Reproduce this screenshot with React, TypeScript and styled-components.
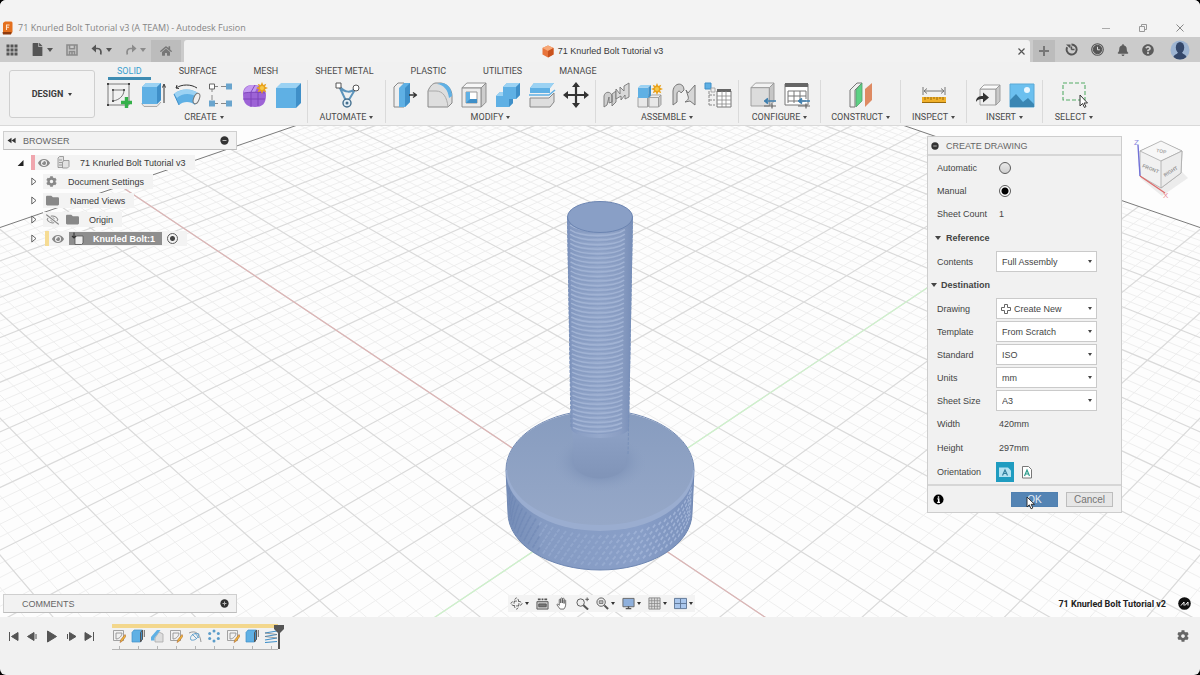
import React from "react";
import styled, { createGlobalStyle, css } from "styled-components";
import { FaBell, FaQuestionCircle, FaCog, FaFolder, FaHome, FaEye, FaRegEyeSlash, FaFile } from "react-icons/fa";

const GlobalStyle = createGlobalStyle`
  * { box-sizing: border-box; }
  body { margin: 0; background: #000; }
  button, select, input { font: inherit; color: inherit; margin: 0; }
  button { background: none; border: 0; padding: 0; cursor: default; }
  svg { display: block; flex: none; }
`;

/* ---------- shell ---------- */

const Page = styled.div`
  min-height: 100vh;
  display: flex;
  flex-direction: column;
  overflow: hidden;
  border-radius: 6px;
  background: #f1f1f1;
  color: #3c3c3c;
  font-family: Roboto, "Liberation Sans", sans-serif;
  font-size: 9px;
  line-height: 12px;
`;

const TitleBar = styled.header`
  display: flex;
  align-items: center;
  padding: 18px 14px 0 2px;
  height: 37px;
  background: #f3f3f3;
  color: #858585;
`;

const WindowTitle = styled.h1`
  flex: 1;
  margin: 0 0 0 5px;
  font: 400 9px/12px "Open Sans", "Noto Sans", sans-serif;
`;

const WindowButtons = styled.div`
  display: flex;
  gap: 25px;
`;

const QuickBar = styled.div`
  display: flex;
  height: 25px;
  background: #cbcbcb;
  color: #5c5c5c;
`;

const QuickTools = styled.div`
  display: flex;
  align-items: center;
  gap: 13px;
  width: 151px;
  padding-left: 6px;
`;

const QuickButton = styled.button<{ $dim?: boolean }>`
  display: flex;
  align-items: center;
  gap: 3px;
  color: ${(p) => (p.$dim ? "#8b8b8b" : "#555")};
`;

const SquareTab = styled.button<{ $width: number }>`
  display: flex;
  align-items: center;
  justify-content: center;
  width: ${(p) => p.$width}px;
  margin: 3px 3px 0 0;
  background: #bcbcbc;
  color: #777;
`;

const DocumentTab = styled.div`
  flex: 1;
  display: flex;
  align-items: center;
  margin: 3px 3px 0 0;
  padding: 0 4px;
  border-radius: 3px 3px 0 0;
  background: #f2f2f2;
`;

const DocumentName = styled.span`
  flex: 1;
  display: flex;
  align-items: center;
  justify-content: center;
  gap: 4px;
  font: 400 9px/12px "Liberation Sans", sans-serif;
  color: #3a3a3a;
`;

const AccountTools = styled.div`
  display: flex;
  align-items: center;
  gap: 13px;
  padding: 0 10px 0 7px;
`;

const AccountButton = styled.button`
  margin-left: 3px;
`;

/* ---------- ribbon ---------- */

const Ribbon = styled.div`
  display: flex;
  padding-left: 9px;
  height: 64px;
  border-bottom: 1px solid #d9d9d9;
`;

const WorkspaceButton = styled.button`
  display: flex;
  align-items: center;
  justify-content: center;
  gap: 5px;
  width: 86px;
  height: 48px;
  margin-top: 8px;
  border: 1px solid #cfcfcf;
  border-radius: 3px;
  background: #f3f3f3;
  font-weight: 700;
`;

const RibbonBody = styled.div`
  flex: 1;
  padding-left: 6px;
`;

const TabList = styled.nav`
  display: flex;
  gap: 19px;
  padding-left: 7px;
`;

const RibbonTab = styled.button<{ $active?: boolean }>`
  height: 18px;
  padding: 2px 9px 0;
  line-height: 12px;
  border-bottom: 3px solid ${(p) => (p.$active ? "#3f8cb2" : "transparent")};
  color: ${(p) => (p.$active ? "#3aa0cf" : "#4a4a4a")};
`;

const GroupRow = styled.div`
  display: flex;
`;

const Group = styled.section<{ $width: number; $last?: boolean }>`
  display: flex;
  flex-direction: column;
  align-items: center;
  width: ${(p) => p.$width}px;
  border-right: ${(p) => (p.$last ? "0" : "1px solid #dadada")};
`;

const GroupIcons = styled.div`
  display: flex;
  gap: 6px;
  padding: 1px 0 2px;
`;

const GroupLabel = styled.button`
  display: flex;
  align-items: center;
  gap: 3px;
  line-height: 12px;
  color: #4a4a4a;
`;

const Caret = styled.span<{ $small?: boolean }>`
  border: ${(p) => (p.$small ? 2 : 3)}px solid transparent;
  border-top: ${(p) => (p.$small ? 3 : 4)}px solid currentColor;
  border-bottom: 0;
`;

/* ---------- viewport ---------- */

const Viewport = styled.main`
  position: relative;
  flex: 1;
  display: flex;
  background: #fdfdfd;
  min-height: 480px;
  font-family: "Liberation Sans", Arial, sans-serif;
`;

const Scene = styled.svg`
  position: absolute;
  inset: 0;
  width: 100%;
  height: 100%;
`;

const Overlay = styled.div`
  position: relative;
  flex: 1;
  display: flex;
  flex-direction: column;
  justify-content: space-between;
  padding: 5px 0 4px 3px;
`;

const OverlayTop = styled.div`
  display: flex;
  justify-content: space-between;
  align-items: flex-start;
`;

const OverlayBottom = styled.div`
  display: grid;
  grid-template-columns: 1fr auto 1fr;
  align-items: center;
`;

const PanelBar = styled.div`
  display: flex;
  align-items: center;
  gap: 7px;
  width: 234px;
  height: 19px;
  padding: 0 7px 0 3px;
  border: 1px solid #cfcfcf;
  border-bottom-color: #bdbdbd;
  background: #f2f2f2;
  color: #666;
`;

const PanelName = styled.span<{ $indent?: boolean }>`
  flex: 1;
  padding-left: ${(p) => (p.$indent ? 15 : 0)}px;
`;

const Tree = styled.ul`
  list-style: none;
  margin: 3px 0 0;
  padding: 0;
`;

const TreeRow = styled.li<{ $level: number }>`
  display: flex;
  align-items: center;
  height: 19px;
  padding-left: ${(p) => (p.$level ? 28 : 14)}px;
  color: #3a3a3a;
`;

const Expander = styled.button`
  width: 12px;
`;

const TreeItem = styled.span<{ $gap?: number }>`
  display: flex;
  align-items: center;
  gap: ${(p) => p.$gap ?? 7}px;
  height: 15px;
  padding: 0 9px 0 3px;
  background: #f3f3f3;
  color: #888;
`;

const ItemName = styled.span`
  padding-left: 3px;
  color: #3a3a3a;
`;

const StatusStrip = styled.i<{ $color: string }>`
  width: 4px;
  height: 15px;
  margin-left: 2px;
  background: ${(p) => p.$color};
`;

const SelectedItem = styled.span`
  display: flex;
  align-items: center;
  gap: 9px;
  height: 13px;
  padding: 0 7px 0 2px;
  background: #8e8e8e;
  color: #fff;
  font-weight: 700;
`;

const radioLook = css`
  appearance: none;
  border: 1px solid #5c5c5c;
  border-radius: 50%;
`;

const ActivateRadio = styled.input`
  ${radioLook}
  width: 11px;
  height: 11px;
  background: radial-gradient(circle, #444 0 2px, #f3f3f3 3px);
`;

/* ---------- dialog ---------- */

const RightSide = styled.div`
  display: flex;
  align-items: flex-start;
  gap: 10px;
  padding: 5px 8px 0 0;
`;

const Dialog = styled.form`
  width: 195px;
  border: 1px solid #cdcdcd;
  background: #f1f1f1;
  color: #444;
`;

const DialogHeader = styled.div`
  display: flex;
  align-items: center;
  gap: 7px;
  height: 19px;
  padding-left: 3px;
  border-bottom: 2px solid #d6d6d6;
  color: #666;
`;

const Field = styled.div<{ $plain?: boolean }>`
  display: grid;
  grid-template-columns: 59px 101px;
  align-items: center;
  height: ${(p) => (p.$plain ? 24 : 23)}px;
  padding-left: 9px;
`;

const Section = styled.h2<{ $indent?: boolean }>`
  display: flex;
  align-items: center;
  gap: ${(p) => (p.$indent ? 5 : 4)}px;
  height: 24px;
  margin: 0;
  padding-left: ${(p) => (p.$indent ? 7 : 3)}px;
  font-size: 9px;
  font-weight: 700;
`;

const Radio = styled.input`
  ${radioLook}
  width: 12px;
  height: 12px;
  margin-left: 3px;
  background: linear-gradient(#e9e9e9, #cfcfcf);
  &:checked {
    background: radial-gradient(circle, #000 0 3px, #fff 4px);
  }
`;

const Output = styled.output`
  padding-left: 3px;
`;

const SelectBox = styled.span`
  position: relative;
  display: flex;
  align-items: center;
  height: 21px;
  border: 1px solid #cacaca;
  background: #fff;
  > svg {
    position: absolute;
    left: 4px;
    pointer-events: none;
  }
  > span {
    position: absolute;
    right: 4px;
    pointer-events: none;
  }
`;

const Select = styled.select<{ $icon?: boolean }>`
  appearance: none;
  width: 100%;
  height: 19px;
  border: 0;
  padding: 0 0 0 ${(p) => (p.$icon ? 17 : 5)}px;
  background: transparent;
`;

const Orientations = styled.div`
  display: flex;
  gap: 4px;
`;

const OrientationButton = styled.button<{ $on?: boolean }>`
  display: flex;
  align-items: center;
  justify-content: center;
  width: 18px;
  height: 20px;
  background: ${(p) => (p.$on ? "#1f9cc0" : "transparent")};
`;

const DialogFooter = styled.div`
  display: flex;
  align-items: center;
  gap: 8px;
  height: 28px;
  margin-top: 1px;
  padding: 0 8px 0 5px;
  border-top: 2px solid #d6d6d6;
  > svg {
    margin-right: auto;
  }
`;

const ActionButton = styled.button<{ $primary?: boolean }>`
  position: relative;
  width: 47px;
  height: 15px;
  font-size: 10px;
  line-height: 13px;
  border: 1px solid ${(p) => (p.$primary ? "#5080b0" : "#bdbdbd")};
  background: ${(p) => (p.$primary ? "#5484b4" : "#e6e6e6")};
  color: ${(p) => (p.$primary ? "#e4edf6" : "#757575")};
`;

const Pointer = styled.svg`
  position: absolute;
  left: 14px;
  top: 3px;
`;

/* ---------- bottom ---------- */

const NavBar = styled.div`
  display: flex;
  align-items: center;
  gap: 7px;
  height: 17px;
  padding: 0 2px;
  background: #f3f3f3;
`;

const NavButton = styled.button`
  display: flex;
  align-items: center;
  gap: 2px;
  color: #333;
`;

const VersionNote = styled.div`
  display: flex;
  align-items: center;
  justify-content: flex-end;
  gap: 12px;
  padding-right: 9px;
  font-family: Roboto, "Liberation Sans", sans-serif;
  font-weight: 700;
  color: #222;
`;

const Timeline = styled.footer`
  display: flex;
  align-items: flex-start;
  height: 58px;
  padding: 7px 11px 0 7px;
  color: #555;
`;

const Playback = styled.div`
  display: flex;
  gap: 6px;
  padding-top: 6px;
`;

const History = styled.div`
  display: flex;
  margin: 0 auto 0 16px;
`;

const Features = styled.ol`
  display: flex;
  gap: 5px;
  margin: 0;
  padding: 1px 0 0;
  list-style: none;
  border-top: 4px solid #f3d78c;
  border-bottom: 1px solid #b5b5b5;
`;

const Feature = styled.li`
  display: flex;
  flex-direction: column;
  align-items: center;
  gap: 3px;
  &::after {
    content: "";
    width: 1px;
    height: 3px;
    background: #b5b5b5;
  }
`;

const Playhead = styled.svg`
  margin-left: -4px;
`;

const SettingsButton = styled.button`
  padding-top: 6px;
  color: #666;
`;

/* ---------- small glyphs ---------- */

const Dot = ({ plus, info, size = 9 }: { plus?: boolean; info?: boolean; size?: number }) => (
  <svg width={size} height={size} viewBox="0 0 10 10">
    <circle cx="5" cy="5" r="4.6" fill={info ? "#000" : "#333"} />
    {info ? (
      <path d="M5 2v1.400M4 4.400h1.200v3M3.800 7.600h2.600" stroke="#fff" strokeWidth="1.300" fill="none" />
    ) : (
      <path d={plus ? "M2.800 5h4.400M5 2.800v4.400" : "M2.800 5h4.400"} stroke="#bbb" strokeWidth="1.100" />
    )}
  </svg>
);

const Collapse = () => (
  <svg width="9" height="7" viewBox="0 0 9 7"><path d="M4.500 0.800v5.400L0.500 3.500zM8.600 0.800v5.400L4.600 3.500z" fill="#333" /></svg>
);

const ClosedArrow = () => (
  <svg width="6" height="9" viewBox="0 0 6 9"><path d="M0.800 1v7L5 4.500z" fill="#fdfdfd" stroke="#555" strokeWidth="0.900" /></svg>
);

const OpenArrow = () => (
  <svg width="8" height="8" viewBox="0 0 8 8"><path d="M6.500 1v6H0.600z" fill="#222" /></svg>
);

const CurvedArrow = ({ forward }: { forward?: boolean }) => (
  <svg width="12" height="12" viewBox="0 0 12 12">
    <g transform={forward ? "matrix(-1 0 0 1 12 0)" : undefined}>
      <path d="M3 4.500h3.500c3 0 4 2.500 3.200 6" fill="none" stroke="currentColor" strokeWidth="1.700" />
      <path d="M5 0.500v8L0.500 4.500z" fill="currentColor" />
    </g>
  </svg>
);

const DiskIcon = () => (
  <svg width="12" height="12" viewBox="0 0 12 12" fill="none" stroke="currentColor" strokeWidth="1.600">
    <path d="M1 1h10v10H1zM3.500 1v3.800h5V1M3.500 11V7.500h5V11M6 8v3" />
  </svg>
);

const ComponentGlyph = ({ light }: { light?: boolean }) => (
  <svg width="13" height="13" viewBox="0 0 13 13" fill={light ? "#ededed" : "#e2e2e2"} stroke={light ? "#555" : "#8a8a8a"} strokeWidth="0.800">
    {light ? (
      <>
        <path d="M4 5.500l1.500-1.500h6.500v7l-1.500 1.500H4z" />
        <path d="M3 0.500v5.500M1 4l2 2 2-2" fill="none" stroke="#333" strokeWidth="1.100" />
      </>
    ) : (
      <>
        <path d="M1 2l1.500-1.500h4v11H1z" />
        <path d="M2 4h3M2 6.500h3M2 9h3" />
        <path d="M5.500 6l1.500-1.500h5v6l-1.500 1.500h-5z" />
      </>
    )}
  </svg>
);

const FusionLogo = () => (
  <svg width="11" height="14" viewBox="0 0 11 14">
    <path d="M1 2l2-1.500h6.500l1 1V11L9 13H1z" fill="#e4701e" />
    <path d="M0.500 11h9L9 13.500H1z" fill="#8f3a0c" />
    <path d="M4.500 9V4h3M4.500 6.300h2.500" stroke="#ffe3cc" strokeWidth="1.100" fill="none" />
  </svg>
);

/* ---------- ribbon drawings ---------- */

const BLUE = "#5fb0e4";
const BLUE_D = "#3f8fc8";
const BLUE_L = "#9bd2f3";
const GREY = "#dedede";
const LINE = "#7a7a7a";

const Ico = ({ children, size = 28 }: { children: React.ReactNode; size?: number }) => (
  <svg width={size} height={size} viewBox="0 0 28 28" fill="none" strokeLinejoin="round">{children}</svg>
);

const Cube = ({ x = 1, y = 2, s = 24, f = BLUE, t = BLUE_L, r = BLUE_D, stroke = "none" }) => {
  const d = s * 0.2;
  return (
    <g stroke={stroke} strokeWidth="0.9">
      <path d={`M${x} ${y + d}h${s - d}v${s - d}h${d - s}z`} fill={f} />
      <path d={`M${x} ${y + d}l${d} ${-d}h${s - d}l${-d} ${d}z`} fill={t} />
      <path d={`M${x + s - d} ${y + d}l${d} ${-d}v${s - d}l${-d} ${d}z`} fill={r} />
    </g>
  );
};

const Spark = ({ x, y }: { x: number; y: number }) => (
  <g transform={`translate(${x} ${y})`}>
    <path d="M0-6l1.300 3 3-1.300-1.300 3 3 1.300-3 1.300 1.300 3-3-1.300L0 6l-1.300-3-3 1.300 1.300-3-3-1.300 3-1.300-1.300-3 3 1.300z" fill="#e9a21c" />
    <circle r="2" fill="#f7c94a" />
  </g>
);

const Arrows = ({ x, y }: { x: number; y: number }) => (
  <g transform={`translate(${x} ${y})`} stroke="#666" strokeWidth="1.200">
    <path d="M0 0h12M4-2.500L1 0l3 2.500" stroke="#3f7fae" strokeWidth="1.700" />
    <path d="M0 5h12M8 2.500v5" />
  </g>
);

const icons: Record<string, React.ReactNode> = {
  sketch: <><path d="M3 3h21v21H3z" stroke={LINE} /><path d="M2 2h2v2H2zM23 2h2v2h-2zM2 23h2v2H2z" fill="#444" /><path d="M8 9h11c0 6-5 10-11 11z" stroke="#777" /><path d="M7 8h2v2H7zM18 8h2v2h-2zM7 19h2v2H7z" fill="#555" /><path d="M21.500 16v11M16 21.500h11" stroke="#35b04a" strokeWidth="3.400" /></>,
  extrude: <><path d="M3 22v1l2 2.500h13l4-4.500" fill="#e6e6e6" stroke="#999" strokeWidth=".8" /><path d="M3 6l4-4h15v17l-4 4H3z" fill={BLUE} /><path d="M3 6l4-4h15l-4 4z" fill={BLUE_L} /><path d="M18 6l4-4v17l-4 4z" fill={BLUE_D} /><path d="M25 22V5M23.500 6.500L25 3l1.500 3.500" stroke="#333" /></>,
  revolve: <><path d="M1 13c6-6 19-6 25 0l-4 11c-4-4-12-4-16 0z" fill={BLUE} /><path d="M1 13c6-6 19-6 25 0l-2 3c-6-4-15-4-20 1z" fill={BLUE_L} /><path d="M1 13l5 11" stroke={BLUE_D} /><ellipse cx="23.500" cy="17.500" rx="2.800" ry="5.500" fill="#eee" stroke="#777" transform="rotate(22 23.5 17.500)" /><path d="M3 7C9 3 18 3 24 7M3 7l1-3M3 7l3 .5" stroke="#333" /></>,
  pattern: <><path d="M6 5.500h16M6 22.500h16M5 6v16" stroke="#888" strokeDasharray="5 3" /><path d="M2.500 3h5v5h-5z" fill="#fff" stroke="#666" /><path d="M19 2.500h6v6h-6zM2 19.500h6v6H2zM19 19.500h6v6h-6z" fill="#6aa5ce" /></>,
  form: <><path d="M2 13c0-6 4-9 9-9 8 0 14 3 14 10 0 9-4 12-11 12C6 26 2 23 2 13z" fill="#9d63d6" /><path d="M3 10c2-5 6-6 9-6l5 1-3 6c-4 0-8 0-11 1z" fill="#c49af0" /><path d="M10 11v15M17 11v14M2 18h22M14 4l-4 7M3 12c5-1 15-1 21 0" stroke="#7c42b8" strokeWidth=".9" /><Spark x={21} y={7} /></>,
  box: <Cube x={1} y={2} s={25} />,
  automate: <><path d="M6 5l8 17L23 7M7 6c5 6 11 6 16 1" stroke="#5d94bb" strokeWidth="2" /><path d="M3 2h5v5H3z" fill="#fff" stroke="#555" /><circle cx="23" cy="7" r="3" fill="#fff" stroke="#555" /><circle cx="14" cy="22" r="4" fill="#e2eef6" stroke="#446f8e" strokeWidth="1.400" /><circle cx="14" cy="22" r="1.500" fill="#446f8e" /></>,
  presspull: <><path d="M2 6l4-4h6v24H2z" fill="#eee" stroke="#888" /><path d="M7 7l5-5h6v19l-5 5H7z" fill={BLUE} /><path d="M13 7l5-5v19l-5 5z" fill={BLUE_D} /><path d="M17 14h7M21 11.500l3.500 2.500-3.500 2.500" stroke="#333" strokeWidth="1.300" /></>,
  fillet: <><path d="M2 10c2-5 5-8 8-8h5c7 1 11 7 11 13v7l-4 4H2z" fill={GREY} stroke="#888" /><path d="M11 3c7 1 11 6 12 14l3-2C26 8 22 2 15 2z" fill={BLUE} /><path d="M2 10h8c7 0 11 6 12 16" stroke="#aaa" /></>,
  shell: <><Cube x={2} y={2} s={24} f="#ececec" t="#f7f7f7" r="#cdcdcd" stroke="#888" /><path d="M6 11h11v11H6z" fill="#fff" stroke="#999" /><path d="M6 11h4v7h7v4H6z" fill={BLUE} /><path d="M10 18h7v4H6z" fill={BLUE_D} /></>,
  combine: <><path d="M2 15l4-4h3V6l4-4h13v12l-4 4h-3v4l-4 4H2z" fill={BLUE} /><path d="M9 6l4-4h13l-4 4zM2 15l4-4h3v4z" fill={BLUE_L} /><path d="M22 6l4-4v12l-4 4zM15 18h4v4l-4 4z" fill={BLUE_D} /></>,
  split: <><path d="M2 7l4-5h20l-4 5v5H2z" fill={BLUE} /><path d="M2 7l4-5h20l-4 5z" fill={BLUE_L} /><path d="M1 14h20l6-5" stroke={BLUE} strokeWidth="1.500" /><path d="M2 17h19l5-5v9l-4 5H2z" fill={GREY} stroke="#888" /></>,
  move: <><path d="M14 3v22M3 14h22" stroke="#333" strokeWidth="2.200" /><path d="M14 1l4 5h-8zM14 27l4-5h-8zM1 14l5-4v8zM27 14l-5-4v8z" fill="#333" /></>,
  joint: <><path d="M2 26V15c1-5 7-5 8 0v6l-3 1v-6l-2 8zM10 13l4-3v11l-4 4z" fill="#cfcfcf" stroke="#777" strokeWidth=".9" /><path d="M14 8l4 5V6l4 4V5l5-3v14l-4 2v-4l-4 5v-4l-5 3z" fill="#d9d9d9" stroke="#777" strokeWidth=".9" /></>,
  newcomp: <><Cube x={2} y={14} s={12} f="#e8e8e8" t="#f7f7f7" r="#ccc" stroke="#999" /><Cube x={13} y={14} s={12} f="#e8e8e8" t="#f7f7f7" r="#ccc" stroke="#999" /><Cube x={2} y={4} s={13} /><Spark x={21} y={8} /></>,
  asbuilt: <><path d="M3 24V10c1-9 11-9 11-1l-3 3c-1-3-4-2-4 1v8z" fill="#cfcfcf" stroke="#777" /><path d="M16 9l2 3 7-8v20l-5-4-5 1c3-2 4-3 3-6z" fill="#d6d6d6" stroke="#777" /></>,
  bom: <><path d="M1 2h6v6H1z" fill={BLUE} stroke={BLUE_D} /><path d="M7 7h4v4H7z" fill="#eee" stroke="#999" strokeWidth=".8" /><path d="M5 10v14M5 14h6M5 19h6M5 24h6" stroke="#888" strokeDasharray="3 1" /><path d="M13 10h14v16H13z" fill="#fff" stroke="#777" /><path d="M13 8h14v3H13z" fill="#666" /><path d="M13 15h14M13 19h14M13 23h14M18 10v16M22 10v16" stroke="#888" strokeWidth=".8" /></>,
  config: <><Cube x={2} y={2} s={23} f="#dcdcdc" t="#f3f3f3" r="#c6c6c6" stroke="#999" /><Arrows x={15} y={20} /></>,
  configtable: <><path d="M2 3h23v21H2z" fill="#fff" stroke="#777" /><path d="M2 2h23v4H2z" fill="#666" /><path d="M5 10h18M5 15h18M5 20h18M5 10v12M11 10v12M17 10v12M23 10v8" stroke="#777" /><Arrows x={15} y={20} /></>,
  plane: <><path d="M3 9l7-7h5L8 9v17H3z" fill="#eee" stroke="#777" /><path d="M9 9l6-7v18l-6 6z" fill="#5cd184" stroke="#55a070" strokeWidth=".8" /><path d="M18 8l7-6v17l-7 7z" fill="#de8a62" /></>,
  measure: <><path d="M3 6v8M25 6v8M4 10h20M7 7.500L4 10l3 2.500M21 7.500l3 2.500-3 2.500" stroke="#777" /><path d="M2 16h24v6H2z" fill="#f0b02a" /><path d="M5 16v3M8 16v2M11 16v3M14 16v2M17 16v3M20 16v2M23 16v3M2 21.500h24" stroke="#9a6a0a" /></>,
  insert: <><Cube x={6} y={4} s={20} f="#efefef" t="#fbfbfb" r="#c9c9c9" stroke="#999" /><path d="M2 21c0-5 3-6 7-6v-3.500l6 5-6 5V18c-3 0-5 0-7 3z" fill="#333" /></>,
  image: <><path d="M2 3h24v23H2z" fill="#6cc0ef" stroke="#5aa9d6" /><circle cx="19" cy="9" r="3" fill="#eaf7ff" /><path d="M2 19l6-6 7 8 5-4 6 6v3H2z" fill="#3a86b3" /></>,
  select: <><path d="M3 2h22v17H3z" stroke="#55ab66" strokeWidth="1.100" strokeDasharray="4 2" /><path d="M20 14v11l2.500-2.500 2 4 1.500-1-2-3.500h3.500z" fill="#fff" stroke="#333" /></>,
};

const tabs = ["SOLID", "SURFACE", "MESH", "SHEET METAL", "PLASTIC", "UTILITIES", "MANAGE"];

const groups = [
  { name: "CREATE", width: 207, items: ["sketch", "extrude", "revolve", "pattern", "form", "box"] },
  { name: "AUTOMATE", width: 78, items: ["automate"] },
  { name: "MODIFY", width: 210, items: ["presspull", "fillet", "shell", "combine", "split", "move"] },
  { name: "ASSEMBLE", width: 143, items: ["joint", "newcomp", "asbuilt", "bom"] },
  { name: "CONFIGURE", width: 82, items: ["config", "configtable"] },
  { name: "CONSTRUCT", width: 80, items: ["plane"] },
  { name: "INSPECT", width: 66, items: ["measure"] },
  { name: "INSERT", width: 76, items: ["insert", "image"] },
  { name: "SELECT", width: 62, items: ["select"] },
];

/* ---------- scene ---------- */

// Ground plane projection: two vanishing directions, symmetric about x = 600.
const project = (i: number, j: number): [number, number] => {
  const scale = 1 / (0.009134 - 0.000334 * (i + j));
  return [600 + ((i - j) / 2) * scale, 7.81 * scale - 494.8];
};

const MIN = -9;
const MAX = 12;

const gridPath = (values: number[]) =>
  values
    .map((v) => {
      const [a, b] = [project(v, MIN), project(v, MAX)];
      const [c, d] = [project(MIN, v), project(MAX, v)];
      return [[a, b], [c, d]].map(([p, q]) => `M${p.map((n) => n.toFixed(1)).join(" ")}L${q.map((n) => n.toFixed(1)).join(" ")}`).join("");
    })
    .join("");

const major = Array.from({ length: MAX - MIN }, (_, n) => MIN + 1 + n);
const minor = Array.from({ length: (MAX - MIN) * 5 }, (_, n) => MIN + n / 5).filter((v) => Math.abs(v - Math.round(v)) > 0.01);

const GroundLine = ({ from, to, color, w = 1 }: { from: [number, number]; to: [number, number]; color: string; w?: number }) => (
  <line x1={from[0]} y1={from[1]} x2={to[0]} y2={to[1]} stroke={color} strokeWidth={w} />
);

// Diamond facets wrapped round the front half of the head, brighter towards the right.
const Knurl = () => {
  const marks: React.ReactNode[] = [];
  for (let row = 0; row < 6; row++) {
    for (let n = 0; n < 40; n++) {
      const a = ((n + (row % 2) / 2) / 40) * Math.PI;
      if (a < 0.08 || a > 3.06) continue;
      const t = row / 5;
      const x = 600 + (92 - t * 1.5) * Math.cos(a);
      const y = 480 + t * 28 + (57 - t) * Math.sin(a);
      const side = Math.cos(a);
      const w = 0.6 + 1.5 * Math.sin(a);
      marks.push(
        <path
          key={`${row}-${n}`}
          d={`M${x - w} ${y + 1}L${x + w * 0.3} ${y - 2.2}L${x + w} ${y - 0.8}L${x - w * 0.3} ${y + 2.2}z`}
          fill={side > 0 ? "#b4c5e4" : side < -0.65 ? "#6680af" : "#a3b6da"}
          opacity={side > 0 ? 0.3 + 0.4 * side : 0.4}
        />,
      );
    }
  }
  return <>{marks}</>;
};

const Bolt = () => (
  <g>
    <defs>
      <linearGradient id="side" x1="0" x2="1">
        <stop offset="0" stopColor="#748cb7" /><stop offset="0.2" stopColor="#859bc3" /><stop offset="0.7" stopColor="#899fc8" /><stop offset="1" stopColor="#7a91bc" />
      </linearGradient>
      <linearGradient id="top" x1="0" y1="0" x2="0" y2="1">
        <stop offset="0" stopColor="#879cbf" /><stop offset="1" stopColor="#96a8c8" />
      </linearGradient>
      <linearGradient id="shaft" x1="0" x2="1">
        <stop offset="0" stopColor="#7b91bc" /><stop offset="0.18" stopColor="#8b9fc4" /><stop offset="0.5" stopColor="#95a8cb" /><stop offset="0.8" stopColor="#8b9ec3" /><stop offset="1" stopColor="#768db7" />
      </linearGradient>
      <linearGradient id="shank" x1="0" y1="0" x2="0" y2="1">
        <stop offset="0" stopColor="#8ea2c6" /><stop offset="1" stopColor="#8094b8" />
      </linearGradient>
      <radialGradient id="fillet">
        <stop offset="0.5" stopColor="#7b90b6" /><stop offset="1" stopColor="#8da1c3" stopOpacity="0" />
      </radialGradient>
    </defs>
    <path d="M506 470L508 513A92 57 0 0 0 692 513L694 470z" fill="url(#side)" stroke="#6f87b2" />
    <Knurl />
    <ellipse cx="600" cy="471" rx="94" ry="60" fill="#9aadd0" />
    <ellipse cx="600" cy="468" rx="93" ry="57" fill="url(#top)" />
    <path d="M506 470A94 60 0 0 1 694 470" fill="none" stroke="#748bb4" />
    <ellipse cx="600" cy="462" rx="48" ry="30" fill="url(#fillet)" opacity="0.700" />
    <path d="M572 425L574 466A27 17 0 0 0 626 466L628 425z" fill="url(#shank)" />
    <path d="M567 217L571 428A29 10 0 0 0 629 428L633 217z" fill="url(#shaft)" />
    {Array.from({ length: 45 }, (_, n) => {
      const y = 225 + n * 4.6;
      const inset = (n / 45) * 3;
      return (
        <g key={n} fill="none">
          <path d={`M${570 + inset} ${y}A30 10 0 0 0 ${625 - inset} ${y}`} stroke="#a1b3d4" strokeWidth="1.500" />
          <path d={`M${570 + inset} ${y + 2}A30 10 0 0 0 ${625 - inset} ${y + 2}`} stroke="#869bc2" strokeWidth="0.900" />
        </g>
      );
    })}
    <path d="M567.500 217L571 428M632.500 217L628 455" fill="none" stroke="#7890ba" strokeDasharray="3 1.500" />
    <ellipse cx="600" cy="217" rx="32.500" ry="15.500" fill="#899fc6" stroke="#6c85b2" />
  </g>
);

const ModelScene = () => (
  <Scene viewBox="0 126 1200 491" preserveAspectRatio="xMidYMid slice" role="img" aria-label="Knurled bolt on the ground grid">
    <path d={gridPath(minor)} stroke="#eeeeee" strokeWidth="1" />
    <path d={gridPath(major)} stroke="#dadada" strokeWidth="1.200" />
    <GroundLine from={project(MIN, 2)} to={project(MAX, 2)} color="#dcb4b4" w={1.2} />
    <GroundLine from={project(2, MIN)} to={project(2, MAX)} color="#cdf3ca" w={1.2} />
    <GroundLine from={project(MIN, MIN)} to={project(MIN, MAX)} color="#7a7a7a" />
    <GroundLine from={project(MIN, MIN)} to={project(MAX, MIN)} color="#7a7a7a" />
    <Bolt />
  </Scene>
);

const ViewCube = () => (
  <svg width="60" height="68" viewBox="0 0 60 68" fontFamily="Liberation Sans, sans-serif">
    <path d="M8 42l22 18 26-18-6-6z" fill="#e4e4e4" opacity="0.700" />
    <path d="M8 15L29 6l21 9-1 22-20 15-21-12z" fill="#f1f1f1" stroke="#bbb" />
    <path d="M8 15l21 10 21-10L29 5z" fill="#f7f7f7" stroke="#aaa" strokeWidth="0.800" />
    <path d="M29 25v27l20-15 1-22z" fill="#ececec" stroke="#aaa" strokeWidth="0.800" />
    <path d="M6 9l2 31" stroke="#7272d8" strokeWidth="1.400" />
    <path d="M8 40l25 17" stroke="#dd6c6c" strokeWidth="1.400" />
    <text x="2" y="9" fontSize="8" fill="#8a8ae0">Z</text>
    <text x="31" y="62" fontSize="8" fill="#e88a94">X</text>
    <text x="10" y="31" fontSize="5" fontWeight="700" fill="#999" transform="rotate(22 10 31)">FRONT</text>
    <text x="33" y="41" fontSize="5" fontWeight="700" fill="#999" transform="rotate(-32 33 41)">RIGHT</text>
    <text x="24" y="16" fontSize="5" fontWeight="700" fill="#aaa" transform="rotate(10 24 16)">TOP</text>
  </svg>
);

/* ---------- navigation and timeline drawings ---------- */

const S = ({ w = 13, children }: { w?: number; children: React.ReactNode }) => (
  <svg width={w} height={w} viewBox="0 0 14 14" fill="none" stroke="#555" strokeLinejoin="round">{children}</svg>
);

const navTools = [
  { name: "Orbit", caret: true, icon: <><ellipse cx="7" cy="7" rx="6" ry="2.600" strokeDasharray="3 1.500" /><ellipse cx="7" cy="7" rx="2.600" ry="6" strokeDasharray="3 1.500" /></> },
  { name: "Look at", icon: <><path d="M1 5h12v8H1z" fill="#ccc" /><path d="M3 7.500h8v3H3z" fill="#777" /><path d="M2 2.500h3M6 2.500h2M9 2.500h3" strokeWidth="2" /></> },
  { name: "Pan", icon: <path d="M4.500 13L1 8.500c0-1.300 1.500-1 2.500.5V3c.2-1 1.400-1 1.600 0V6.500 1.800c.2-1 1.600-1 1.800 0V6.500 2c.2-1 1.600-1 1.800 0v5V3.800c.2-1 1.500-1 1.700 0 0 4 .6 6.200-1.900 9.200z" fill="#fff" strokeWidth="0.900" /> },
  { name: "Zoom", icon: <><circle cx="5" cy="6" r="4" fill="#eee" /><path d="M8 9l5 4.500" strokeWidth="2.200" /><path d="M10 2.500h4M12 .5v4" /></> },
  { name: "Fit", caret: true, icon: <><circle cx="5.500" cy="5.500" r="4.500" fill="#eee" /><path d="M3.500 4h4v3h-4z" fill="#bbb" strokeWidth="0.700" /><path d="M9 9l4 4" strokeWidth="2.200" /></> },
  { name: "Display settings", caret: true, icon: <><path d="M1 1.500h12v9H1z" fill="#8fb0dc" stroke="#666" /><path d="M7 10v2M4 12.500h6" strokeWidth="1.500" /></> },
  { name: "Grid and snaps", caret: true, icon: <><path d="M1 1h12v12H1z" fill="#dcdcdc" stroke="#888" /><path d="M1 4h12M1 7h12M1 10h12M4 1v12M7 1v12M10 1v12" stroke="#888" strokeWidth="0.800" /></> },
  { name: "Viewports", caret: true, icon: <><path d="M0.500 1.500h13v11H0.500z" fill="#a9c6ec" stroke="#5d7594" /><path d="M7 2v10M0.500 7h13" stroke="#5d7594" /></> },
];

const sketchStep = <><path d="M1.500 1.500h10v10h-10z" stroke="#999" strokeWidth="0.900" /><path d="M4 4h6c0 3-3 6-6 6z" stroke="#888" strokeWidth="0.800" /><path d="M13 5.500L9 10.500l-1 3 2.500-1.500 3.500-5z" fill="#eeb63a" stroke="#b06a35" strokeWidth="0.600" /></>;
const extrudeStep = <><path d="M1 3.500L3 1h8.500v9l-2 3H1z" fill={BLUE} stroke={BLUE_D} strokeWidth="0.700" /><path d="M9.500 3.500L11.500 1v9l-2 3z" fill={BLUE_D} /><path d="M13.300 8V1" stroke="#555" strokeWidth="0.900" /></>;

const steps: React.ReactNode[] = [
  sketchStep,
  extrudeStep,
  <><path d="M5 13V9l4-6 4 2v8z" fill="#ddd" stroke="#aaa" strokeWidth="0.800" /><path d="M1 8l6-7h3.500L4.500 9v2.500H1z" fill={BLUE} stroke="none" /></>,
  sketchStep,
  <><path d="M1 4c6-3 11 0 12 9" stroke="#999" /><path d="M3 11c-2-3 2-8 8-6-1 4-4 7-8 6zM4 5l5 5M7 4l4 5" stroke="#5b9cc9" strokeWidth="0.900" /></>,
  <g stroke="none" fill="#5b9cc9">{[0, 1, 2, 3, 4, 5].map((n) => <circle key={n} cx={7 + 5 * Math.sin((n * Math.PI) / 3)} cy={7 - 5 * Math.cos((n * Math.PI) / 3)} r="1.500" />)}</g>,
  sketchStep,
  extrudeStep,
  <><path d="M1 4l12-2M1 7.500l12-2M1 11l12-2M1 13.500l12-1" stroke={BLUE_D} strokeWidth="1.100" /><path d="M1 4l12 1.500M1 7.500l12 1.500" stroke="#777" strokeWidth="0.700" /></>,
];

const playback: [string, string][] = [
  ["Go to start", "M2.500 2v9M11 2.500v8L4.500 6.500z"],
  ["Step back", "M8 2.500v8L1.500 6.500zM10 4v5"],
  ["Play", "M2.500 1v11L11.500 6.500z"],
  ["Step forward", "M5.500 2.500v8L12 6.500zM3.500 4v5"],
  ["Go to end", "M10.500 2v9M2 2.500v8L8.500 6.500z"],
];

const selects = [
  { id: "drawing", label: "Drawing", value: "Create New", icon: true },
  { id: "template", label: "Template", value: "From Scratch" },
  { id: "standard", label: "Standard", value: "ISO" },
  { id: "units", label: "Units", value: "mm" },
  { id: "sheet-size", label: "Sheet Size", value: "A3" },
];

const SelectField = ({ id, label, value, icon }: { id: string; label: string; value: string; icon?: boolean }) => (
  <Field>
    <label htmlFor={id}>{label}</label>
    <SelectBox>
      {icon && (
        <svg width="10" height="10" viewBox="0 0 10 10"><path d="M3.500.500h3v3h3v3h-3v3h-3v-3h-3v-3h3z" fill="#fff" stroke="#666" /></svg>
      )}
      <Select id={id} $icon={icon} defaultValue={value}><option>{value}</option></Select>
      <Caret $small />
    </SelectBox>
  </Field>
);

const SheetIcon = ({ portrait }: { portrait?: boolean }) => (
  <svg width="14" height="14" viewBox="0 0 14 14" fill="none">
    {portrait ? (
      <>
        <path d="M2.500 1.500h6l3 3v8.500h-9z" fill="#fff" stroke="#777" />
        <path d="M4.500 11L7 5l2.500 6M5.500 9h3" stroke="#2d9c8c" strokeWidth="1.200" />
      </>
    ) : (
      <>
        <path d="M1 2.500h9l3 3V12H1z" fill="#b5e2f1" />
        <path d="M4.500 10.500L7 5l2.500 5.500M5.500 8.500h3" stroke="#337f9d" strokeWidth="1.200" />
      </>
    )}
  </svg>
);

const CreateDrawing = () => (
  <Dialog onSubmit={(e) => e.preventDefault()}>
    <DialogHeader><Dot size={8} />CREATE DRAWING</DialogHeader>
    <Field><label htmlFor="auto">Automatic</label><Radio type="radio" name="mode" id="auto" /></Field>
    <Field><label htmlFor="manual">Manual</label><Radio type="radio" name="mode" id="manual" defaultChecked /></Field>
    <Field $plain><span>Sheet Count</span><Output>1</Output></Field>
    <Section $indent><Caret />Reference</Section>
    <SelectField id="contents" label="Contents" value="Full Assembly" />
    <Section><Caret />Destination</Section>
    {selects.map((s) => <SelectField key={s.id} {...s} />)}
    <Field $plain><span>Width</span><Output>420mm</Output></Field>
    <Field $plain><span>Height</span><Output>297mm</Output></Field>
    <Field>
      <span>Orientation</span>
      <Orientations>
        <OrientationButton type="button" $on aria-label="Landscape"><SheetIcon /></OrientationButton>
        <OrientationButton type="button" aria-label="Portrait"><SheetIcon portrait /></OrientationButton>
      </Orientations>
    </Field>
    <DialogFooter>
      <Dot info size={11} />
      <ActionButton $primary type="submit">
        OK
        <Pointer width="10" height="14" viewBox="0 0 10 14"><path d="M1 1v10l2.300-2.200L5 12.800l1.800-.8-1.600-3.700h3.300z" fill="#fff" stroke="#222" strokeWidth="0.900" /></Pointer>
      </ActionButton>
      <ActionButton type="button">Cancel</ActionButton>
    </DialogFooter>
  </Dialog>
);

const BrowserPanel = () => (
  <div>
    <PanelBar><Collapse /><PanelName>BROWSER</PanelName><Dot /></PanelBar>
    <Tree>
      <TreeRow $level={0}>
        <Expander aria-label="Collapse"><OpenArrow /></Expander>
        <StatusStrip $color="#f0a6ae" />
        <TreeItem><FaEye size={12} /><ComponentGlyph /><ItemName>71 Knurled Bolt Tutorial v3</ItemName></TreeItem>
      </TreeRow>
      <TreeRow $level={1}>
        <Expander aria-label="Expand"><ClosedArrow /></Expander>
        <TreeItem $gap={8}><FaCog size={11} /><ItemName>Document Settings</ItemName></TreeItem>
      </TreeRow>
      <TreeRow $level={1}>
        <Expander aria-label="Expand"><ClosedArrow /></Expander>
        <TreeItem $gap={8}><FaFolder size={13} /><ItemName>Named Views</ItemName></TreeItem>
      </TreeRow>
      <TreeRow $level={1}>
        <Expander aria-label="Expand"><ClosedArrow /></Expander>
        <TreeItem><FaRegEyeSlash size={13} /><FaFolder size={13} /><ItemName>Origin</ItemName></TreeItem>
      </TreeRow>
      <TreeRow $level={1}>
        <Expander aria-label="Expand"><ClosedArrow /></Expander>
        <StatusStrip $color="#f6dc94" />
        <TreeItem $gap={5}>
          <FaEye size={12} />
          <SelectedItem><ComponentGlyph light />Knurled Bolt:1</SelectedItem>
          <ActivateRadio type="radio" aria-label="Activate Knurled Bolt:1" defaultChecked />
        </TreeItem>
      </TreeRow>
    </Tree>
  </div>
);

export default function App() {
  return (
    <Page>
      <GlobalStyle />
      <TitleBar>
        <FusionLogo />
        <WindowTitle>71 Knurled Bolt Tutorial v3 (A TEAM) - Autodesk Fusion</WindowTitle>
        <WindowButtons>
          <button aria-label="Minimize"><svg width="12" height="12" viewBox="0 0 12 12" stroke="#aaa"><path d="M2 6.500h8" /></svg></button>
          <button aria-label="Restore"><svg width="12" height="12" viewBox="0 0 12 12" fill="none" stroke="#999"><path d="M2.500 4.500h5v5h-5zM4.500 4V2.500h5v5H8" /></svg></button>
          <button aria-label="Close"><svg width="12" height="12" viewBox="0 0 12 12" stroke="#888"><path d="M2.500 2.500l7 7M9.500 2.500l-7 7" /></svg></button>
        </WindowButtons>
      </TitleBar>

      <QuickBar>
        <QuickTools>
          <QuickButton aria-label="Data panel">
            <svg width="12" height="12" viewBox="0 0 12 12" fill="currentColor"><path d="M0.500 0.500h3v3h-3zM4.500 0.500h3v3h-3zM8.500 0.500h3v3h-3zM0.500 4.500h3v3h-3zM4.500 4.500h3v3h-3zM8.500 4.500h3v3h-3zM0.500 8.500h3v3h-3zM4.500 8.500h3v3h-3zM8.500 8.500h3v3h-3z" /></svg>
          </QuickButton>
          <QuickButton aria-label="File"><FaFile size={13} /><Caret /></QuickButton>
          <QuickButton aria-label="Save" $dim><DiskIcon /></QuickButton>
          <QuickButton aria-label="Undo"><CurvedArrow /><Caret /></QuickButton>
          <QuickButton aria-label="Redo" $dim><CurvedArrow forward /><Caret /></QuickButton>
        </QuickTools>
        <SquareTab $width={30} aria-label="Home"><FaHome size={12} /></SquareTab>
        <DocumentTab>
          <DocumentName>
            <svg width="12" height="13" viewBox="0 0 12 13"><path d="M6 0.500L11.500 3v6.500L6 12.500.500 9.500V3z" fill="#e8743b" /><path d="M6 .500L11.500 3 6 6 .500 3z" fill="#f7a877" /><path d="M6 6v6.500l5.500-3V3z" fill="#c9521d" /></svg>
            71 Knurled Bolt Tutorial v3
          </DocumentName>
          <button aria-label="Close document"><svg width="9" height="9" viewBox="0 0 9 9" stroke="#555" strokeWidth="1.200"><path d="M1.500 1.500l6 6M7.500 1.500l-6 6" /></svg></button>
        </DocumentTab>
        <SquareTab $width={22} aria-label="New document"><svg width="12" height="12" viewBox="0 0 12 12" stroke="#777" strokeWidth="2"><path d="M6 1v10M1 6h10" /></svg></SquareTab>
        <AccountTools>
          <button aria-label="Updates"><svg width="13" height="13" viewBox="0 0 13 13" fill="none" stroke="#555" strokeWidth="1.900"><path d="M2.200 4.200A5 5 0 1 0 6.500 1.500c2 0 3 .8 4 2" /><path d="M6.500 6.800V3.500M6.500 6.500h3" strokeWidth="1.400" /><path d="M1 1.500h4.500v4z" fill="#555" stroke="none" /></svg></button>
          <button aria-label="Job status"><svg width="13" height="13" viewBox="0 0 13 13" fill="none" stroke="#555"><circle cx="6.500" cy="6.500" r="5.800" strokeWidth="1.100" /><circle cx="6.500" cy="6.500" r="4.200" fill="#555" /><path d="M6.500 3.800v3h2.300" stroke="#ddd" /></svg></button>
          <button aria-label="Notifications"><FaBell size={12} /></button>
          <button aria-label="Help"><FaQuestionCircle size={12} /></button>
          <AccountButton aria-label="Account">
            <svg width="20" height="20" viewBox="0 0 20 20"><circle cx="10" cy="10" r="9.500" fill="#9db4d2" /><ellipse cx="10" cy="7.500" rx="4.200" ry="5.500" fill="#34476a" /><path d="M3.500 17c1-3 4-2.500 4.500-5h4c.5 2.500 3.500 2 4.500 5a9.500 9.500 0 0 1-13 0z" fill="#34476a" /></svg>
          </AccountButton>
        </AccountTools>
      </QuickBar>

      <Ribbon>
        <WorkspaceButton>DESIGN <Caret $small /></WorkspaceButton>
        <RibbonBody>
          <TabList>
            {tabs.map((t, n) => <RibbonTab key={t} $active={n === 0}>{t}</RibbonTab>)}
          </TabList>
          <GroupRow>
            {groups.map((g, n) => (
              <Group key={g.name} $width={g.width} $last={n === groups.length - 1}>
                <GroupIcons>{g.items.map((i) => <button key={i} aria-label={i}><Ico>{icons[i]}</Ico></button>)}</GroupIcons>
                <GroupLabel>{g.name} <Caret $small /></GroupLabel>
              </Group>
            ))}
          </GroupRow>
        </RibbonBody>
      </Ribbon>

      <Viewport>
        <ModelScene />
        <Overlay>
          <OverlayTop>
            <BrowserPanel />
            <RightSide>
              <CreateDrawing />
              <ViewCube />
            </RightSide>
          </OverlayTop>
          <OverlayBottom>
            <PanelBar><PanelName $indent>COMMENTS</PanelName><Dot plus /></PanelBar>
            <NavBar>
              {navTools.map((t) => (
                <NavButton key={t.name} aria-label={t.name}><S>{t.icon}</S>{t.caret && <Caret $small />}</NavButton>
              ))}
            </NavBar>
            <VersionNote>
              71 Knurled Bolt Tutorial v2
              <svg width="13" height="13" viewBox="0 0 13 13"><circle cx="6.500" cy="6.500" r="6.300" fill="#111" /><path d="M3 8.500l3-3.500v3.500M7 8.500L10 5v3.500" stroke="#fff" fill="none" /></svg>
            </VersionNote>
          </OverlayBottom>
        </Overlay>
      </Viewport>

      <Timeline>
        <Playback>
          {playback.map(([name, d]) => (
            <button key={name} aria-label={name}><svg width="13" height="13" viewBox="0 0 13 13" fill="#555" stroke="#555" strokeWidth="1"><path d={d} /></svg></button>
          ))}
        </Playback>
        <History>
          <Features>
            {steps.map((s, n) => <Feature key={n}><S w={14}>{s}</S></Feature>)}
          </Features>
          <Playhead width="10" height="26" viewBox="0 0 10 26"><path d="M0 1h10v4L6 9v16H4V9L0 5z" fill="#555" /></Playhead>
        </History>
        <SettingsButton aria-label="Timeline settings"><FaCog size={12} /></SettingsButton>
      </Timeline>
    </Page>
  );
}
